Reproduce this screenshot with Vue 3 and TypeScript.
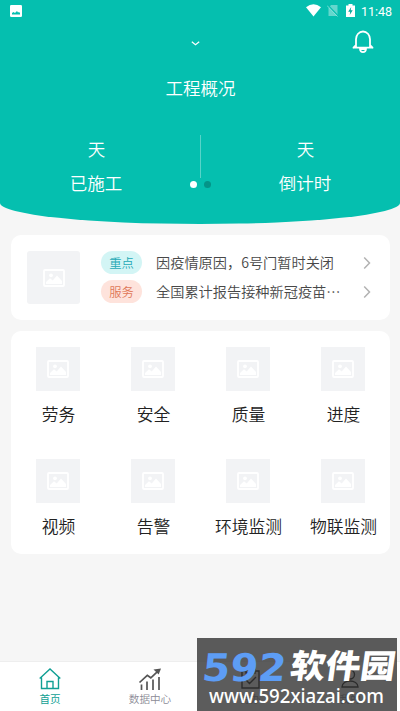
<script setup lang="ts">
interface Notice {
  tag: string
  tone: 'key' | 'service'
  text: string
}

interface Stat {
  value: string
  label: string
}

const stats: Stat[] = [
  { value: '天', label: '已施工' },
  { value: '天', label: '倒计时' },
]

const notices: Notice[] = [
  { tag: '重点', tone: 'key', text: '因疫情原因，6号门暂时关闭' },
  { tag: '服务', tone: 'service', text: '全国累计报告接种新冠疫苗…' },
]

const modules: string[] = ['劳务', '安全', '质量', '进度', '视频', '告警', '环境监测', '物联监测']
</script>

<template>
  <div class="screen">
    <header class="hero">
      <div class="status">
        <svg class="status-pic" viewBox="0 0 12 12">
          <rect width="12" height="12" rx="1.3" fill="#fff" />
          <path d="M2 9.500V8l1.500-1 1.500 1L7 6l1 1.500L9 7l1 1v1.500z" fill="#05bfaf" />
        </svg>
        <div class="status-right">
          <svg class="wifi" viewBox="0 0 15 13"><path d="M0 3.200Q7.500-2.600 15 3.200L7.500 12.600z" fill="#fff" /></svg>
          <svg class="sim" viewBox="0 0 12 13">
            <path d="M4 1h6.500v11H1.500V4z" fill="#fff" opacity=".38" />
            <path d="M.5 1l10.500 11" stroke="#05bfaf" stroke-width="1.800" />
            <path d="M0 1.500L10.500 12.500" stroke="#fff" stroke-width=".8" opacity=".6" />
          </svg>
          <svg class="battery" viewBox="0 0 9 13">
            <path d="M2.500 0h4v1.500H9V13H0V1.500h2.500z" fill="#fff" />
            <path d="M5.200 3L2.200 7.700h2L3.700 11l3-4.700h-2z" fill="#05a99b" />
          </svg>
          <span class="clock">11:48</span>
        </div>
      </div>
      <div class="toolbar">
        <svg class="caret" viewBox="0 0 9 5"><path d="M.8.8l3.700 3 3.700-3" /></svg>
        <svg class="bell" viewBox="0 0 22 24">
          <path d="M1.500 17.700h19M4 17V9.200a7 7.700 0 0 1 14 0V17M4 15l-2.500 2.700M18 15l2.500 2.700M8 19c.4 4.200 5.600 4.200 6 0z" />
        </svg>
      </div>
      <h1 class="title">工程概况</h1>
      <div class="stats">
        <div v-for="stat in stats" :key="stat.label" class="stat">
          <span>{{ stat.value }}</span>
          <span>{{ stat.label }}</span>
        </div>
        <i class="divider"></i>
        <div class="dots"><i class="dot active"></i><i class="dot"></i></div>
      </div>
    </header>

    <section class="card news">
      <div class="thumb large">
        <svg viewBox="0 0 22 18"><rect x="1" y="1" width="20" height="16" rx="1" /><circle cx="8" cy="6.300" r="1.900" /><path d="M3 15v-2l4-3.700 2.700 2.200 4.300-5L19 12v3z" /></svg>
      </div>
      <ul class="notices">
        <li v-for="notice in notices" :key="notice.tag" class="notice">
          <span class="tag" :class="notice.tone">{{ notice.tag }}</span>
          <span class="notice-text">{{ notice.text }}</span>
          <svg class="arrow" viewBox="0 0 8 14"><path d="M1.200 1.500L6.500 7l-5.300 5.500" /></svg>
        </li>
      </ul>
    </section>

    <section class="card grid">
      <div v-for="name in modules" :key="name" class="module">
        <div class="thumb">
          <svg viewBox="0 0 22 18"><rect x="1" y="1" width="20" height="16" rx="1" /><circle cx="8" cy="6.300" r="1.900" /><path d="M3 15v-2l4-3.700 2.700 2.200 4.300-5L19 12v3z" /></svg>
        </div>
        <span>{{ name }}</span>
      </div>
    </section>

    <nav class="tabs">
      <div class="tab current">
        <svg viewBox="0 0 24 24"><path d="M1.700 11.500L12 2l10.300 9.500M3.500 10.500v11h17v-11M9 21.500v-7h6v7" /></svg>
        <span>首页</span>
      </div>
      <div class="tab">
        <svg class="chart" viewBox="0 0 24 24">
          <path d="M3.500 17.500V23M9 14.500V23M15 12.500V23M21 10V23" stroke-width="1.700" />
          <path d="M1.500 15.500L9.300 8.300l3.500 2.500 8-7.500" stroke-width="1.700" />
          <path d="M15.500 2.500L23 1.500l-2.300 6z" fill="#555" stroke="none" />
        </svg>
        <span>数据中心</span>
      </div>
      <div class="tab shaded">
        <svg viewBox="0 0 24 24"><path d="M8 4H4v17h17V4h-4M8 2.500h9V6H8zM8 13l3.500 3.500L18 10" /></svg>
        <span>待办</span>
      </div>
      <div class="tab shaded">
        <svg viewBox="0 0 24 24"><circle cx="12" cy="7.500" r="4.500" /><path d="M4 20c0-8 16-8 16 0z" /></svg>
        <span>我的</span>
      </div>
    </nav>

    <svg class="watermark" viewBox="0 0 200 73">
      <rect width="200" height="73" fill="#333" fill-opacity=".8" />
      <g transform="translate(4 43) skewX(-6)">
        <text class="digits" x="0" y="0" textLength="84" lengthAdjust="spacingAndGlyphs">592</text>
      </g>
      <g transform="translate(92 40) skewX(-8)">
        <text class="brand" x="0" y="0" textLength="105" lengthAdjust="spacingAndGlyphs">软件园</text>
      </g>
      <text class="site" x="12" y="64.500" textLength="175" lengthAdjust="spacingAndGlyphs">www.592xiazai.com</text>
    </svg>
  </div>
</template>

<style>
body {
  margin: 0;
  background: #f6f6f6;
}
</style>

<style scoped>
.screen {
  position: relative;
  display: flex;
  flex-direction: column;
  width: 400px;
  height: 711px;
  overflow: hidden;
  background: #f6f6f6;
  font-family: 'Noto Sans CJK SC', sans-serif;
  font-weight: 350;
  color: #222;
}
svg {
  display: block;
  fill: none;
  flex: none;
}
.hero {
  height: 224px;
  flex: none;
  background: #05bfaf;
  border-radius: 0 0 50% 50% / 0 0 21px 21px;
  color: #fff;
}
.status {
  display: flex;
  justify-content: space-between;
  height: 22px;
  padding: 0 7px 0 10px;
}
.status-pic {
  width: 12px;
  height: 12px;
  margin-top: 5px;
}
.status-right {
  display: flex;
  align-items: flex-start;
  padding-top: 4px;
}
.wifi {
  width: 15px;
  height: 13px;
}
.sim {
  width: 12px;
  height: 13px;
  margin-left: 6px;
}
.battery {
  width: 9px;
  height: 13px;
  margin-left: 7px;
}
.clock {
  margin-left: 6px;
  font: 400 12.5px/15px Roboto, sans-serif;
  width: 32px;
  white-space: nowrap;
}
.toolbar {
  display: flex;
  justify-content: flex-end;
  height: 40px;
  padding: 8px 26.5px 0 0;
  box-sizing: border-box;
}
.caret {
  width: 9px;
  height: 5px;
  margin: 11px 152px 0 0;
  stroke: #fff;
  stroke-width: 1.2;
}
.bell {
  width: 22px;
  height: 24px;
  stroke: #fff;
  stroke-width: 1.8;
  stroke-linejoin: round;
  stroke-linecap: round;
}
.title {
  margin: 13px 0 0;
  text-align: center;
  font-size: 17.5px;
  line-height: 26px;
  font-weight: inherit;
  padding-left: 1px;
}
.stats {
  position: relative;
  display: flex;
  justify-content: space-between;
  margin-top: 29px;
  padding: 0 65px 0 66px;
}
.stat {
  display: flex;
  flex-direction: column;
  align-items: center;
  gap: 8px;
  width: 60px;
  margin-top: 6px;
  font-size: 17.5px;
  line-height: 26px;
}
.stat span:first-child {
  padding-left: 1px;
}
.divider {
  position: absolute;
  left: 199.5px;
  top: 5px;
  width: 1.5px;
  height: 43px;
  background: #57d4c9;
}
.dots {
  position: absolute;
  left: 190px;
  top: 51px;
  display: flex;
  gap: 7px;
}
.dot {
  width: 7px;
  height: 7px;
  border-radius: 50%;
  background: #049488;
}
.dot.active {
  background: #fff;
}
.card {
  margin: 11px 10px 0 11px;
  background: #fff;
  border-radius: 10px;
}
.news {
  display: flex;
  height: 85px;
  box-sizing: border-box;
  padding: 16px 19px 0 16px;
}
.thumb {
  display: flex;
  flex: none;
  align-items: center;
  justify-content: center;
  width: 44px;
  height: 44px;
  background: #f2f3f5;
}
.thumb.large {
  width: 53px;
  height: 53px;
  border-radius: 3px;
}
.thumb svg {
  width: 22px;
  height: 18px;
}
.thumb rect {
  stroke: #fff;
  stroke-width: 1.8;
}
.thumb circle,
.thumb path {
  fill: #fff;
}
.notices {
  display: flex;
  flex: 1;
  flex-direction: column;
  gap: 6px;
  margin: 0 0 0 21px;
  padding: 0;
  list-style: none;
}
.notice {
  display: flex;
  align-items: center;
  height: 23px;
}
.tag {
  flex: none;
  width: 41px;
  height: 23px;
  border-radius: 12px;
  font-size: 12.3px;
  line-height: 24px;
  text-align: center;
}
.key {
  background: #d3f5f5;
  color: #24a9b5;
}
.service {
  background: #fee3dc;
  color: #e07858;
}
.notice-text {
  flex: 1;
  margin-left: 14px;
  font-size: 14.2px;
  line-height: 23px;
  white-space: nowrap;
  color: #484848;
}
.arrow {
  width: 8px;
  height: 14px;
  stroke: #b2b2b2;
  stroke-width: 1.5;
}
.grid {
  display: grid;
  grid-template-columns: repeat(4, 95px);
  grid-auto-rows: 112px;
  height: 223px;
  box-sizing: border-box;
  padding-top: 16px;
}
.module {
  display: flex;
  flex-direction: column;
  align-items: center;
  gap: 10px;
  font-size: 16.8px;
  line-height: 26px;
  white-space: nowrap;
}
.module .thumb {
  margin-left: -1px;
}
.tabs {
  display: flex;
  height: 49px;
  margin-top: auto;
  border-top: 1px solid #eee;
  background: #fff;
}
.tab {
  display: flex;
  flex: 1;
  flex-direction: column;
  align-items: center;
  padding-top: 5px;
  font-size: 10.6px;
  line-height: 15px;
  color: #8b8b96;
}
.tab svg {
  width: 24px;
  height: 24px;
  stroke: #555;
  stroke-width: 1.4;
}
.tab.shaded svg {
  stroke: #111;
}
.tab.current {
  color: #109f94;
  font-weight: 400;
}
.tab.current svg {
  stroke: #109f94;
}
.watermark {
  position: absolute;
  left: 197px;
  top: 638px;
  width: 200px;
  height: 73px;
}
.digits {
  font: 700 38px 'DejaVu Sans', sans-serif;
  fill: #5d9df5;
}
.brand {
  font: 900 33px 'Noto Sans CJK SC', sans-serif;
  fill: #fff;
}
.site {
  font: 500 19.5px 'Noto Sans', sans-serif;
  fill: #fff;
}
</style>
